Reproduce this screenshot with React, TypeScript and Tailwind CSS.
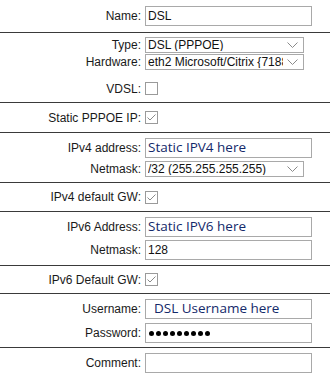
import React from "react";

const F = { fontFamily: '"Liberation Sans", Arial, sans-serif' };
const FV = { fontFamily: '"Open Sans", "Noto Sans", sans-serif' };

function Chevron() {
  return (
    <svg width="11" height="6" viewBox="0 0 11 6" className="shrink-0">
      <polyline points="0.5,0.5 5.5,5.5 10.5,0.5" fill="none" stroke="#8a8a8a" strokeWidth="1" />
    </svg>
  );
}

function Row({ label, children, className = "" }: { label: string; children: React.ReactNode; className?: string }) {
  return (
    <div className={`flex items-center ${className}`}>
      <div className="w-[142px] pr-[1px] text-right text-[12px] leading-none text-[#1a1a1a] whitespace-nowrap" style={F}>
        {label}
      </div>
      <div className="ml-[3px] flex items-center">{children}</div>
    </div>
  );
}

function TextBox({ children, styleVar = false, indent = false }: { children?: React.ReactNode; styleVar?: boolean; indent?: boolean }) {
  return (
    <div className={`w-[167px] h-[20px] border border-[#a9a9a9] bg-white flex items-center overflow-hidden whitespace-nowrap ${indent ? "pl-[8px]" : "pl-[2px]"}`}>
      {styleVar ? (
        <span className="text-[13.5px] leading-none text-[#13296a]" style={FV}>{children}</span>
      ) : (
        <span className="text-[12px] leading-none text-[#111]" style={F}>{children}</span>
      )}
    </div>
  );
}

function SelectBox({ children }: { children: React.ReactNode }) {
  return (
    <div className="w-[159px] h-[16px] border border-[#a9a9a9] bg-white flex items-center pl-[2px] pr-[5px]">
      <span className="flex-1 overflow-hidden whitespace-nowrap text-[12px] leading-none text-[#111]" style={F}>
        {children}
      </span>
      <span className="ml-[4px]"><Chevron /></span>
    </div>
  );
}

function Check({ checked = false }: { checked?: boolean }) {
  return (
    <div className="w-[13px] h-[13px] border border-[#9a9a9a] bg-white flex items-center justify-center">
      {checked && (
        <svg width="11" height="11" viewBox="0 0 11 11">
          <polyline points="1.5,5.5 4,8 9.5,2.5" fill="none" stroke="#8a8a8a" strokeWidth="1" />
        </svg>
      )}
    </div>
  );
}

function Sep() {
  return <div className="h-[1px] bg-[#3a3a3a]" />;
}

export default function App() {
  return (
    <div className="w-[330px] h-[377px] bg-white overflow-hidden" style={F}>
      <div className="pt-[6px] pb-[6px]">
        <Row label="Name:"><TextBox>DSL</TextBox></Row>
      </div>
      <Sep />
      <div className="pt-[4px] h-[69px]">
        <Row label="Type:"><SelectBox>DSL (PPPOE)</SelectBox></Row>
        <Row label="Hardware:" className="mt-[1px]"><SelectBox>eth2 Microsoft/Citrix {"{"}7188FE1B-0A</SelectBox></Row>
        <Row label="VDSL:" className="mt-[12px]"><Check /></Row>
      </div>
      <Sep />
      <div className="h-[29px] flex items-center">
        <div className="w-full"><Row label="Static PPPOE IP:"><Check checked /></Row></div>
      </div>
      <Sep />
      <div className="pt-[5px] h-[49px]">
        <Row label="IPv4 address:"><TextBox styleVar>Static IPV4 here</TextBox></Row>
        <Row label="Netmask:" className="mt-[3px]"><SelectBox>/32 (255.255.255.255)</SelectBox></Row>
      </div>
      <Sep />
      <div className="h-[28px] flex items-center">
        <div className="w-full"><Row label="IPv4 default GW:"><Check checked /></Row></div>
      </div>
      <Sep />
      <div className="pt-[5px] h-[53px]">
        <Row label="IPv6 Address:"><TextBox styleVar>Static IPV6 here</TextBox></Row>
        <Row label="Netmask:" className="mt-[3px]"><TextBox>128</TextBox></Row>
      </div>
      <Sep />
      <div className="h-[27px] flex items-center">
        <div className="w-full"><Row label="IPv6 Default GW:"><Check checked /></Row></div>
      </div>
      <Sep />
      <div className="pt-[5px] h-[53px]">
        <Row label="Username:"><TextBox styleVar indent>DSL Username here</TextBox></Row>
        <Row label="Password:" className="mt-[4px]">
          <div className="w-[167px] h-[20px] border border-[#a9a9a9] bg-white flex items-center pl-[3px] gap-[2px]">
            {Array.from({ length: 9 }).map((_, i) => (
              <span key={i} className="w-[5px] h-[5px] rounded-full bg-black" />
            ))}
          </div>
        </Row>
      </div>
      <Sep />
      <div className="pt-[5px]">
        <Row label="Comment:"><TextBox /></Row>
      </div>
    </div>
  );
}
